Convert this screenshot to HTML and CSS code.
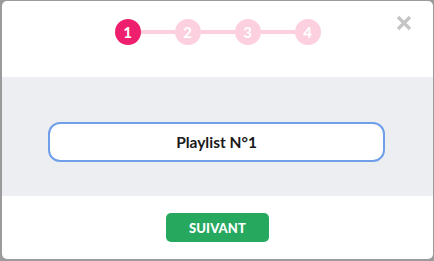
FILE: index.html
```html
<!DOCTYPE html>
<html>
<head>
<meta charset="utf-8">
<link rel="stylesheet" href="styles.css">
</head>
<body>
<div class="modal">
  <div class="head">
    <div class="steps">
      <span class="step active">1</span>
      <span class="bar"></span>
      <span class="step">2</span>
      <span class="bar"></span>
      <span class="step">3</span>
      <span class="bar"></span>
      <span class="step">4</span>
    </div>
    <button class="close" aria-label="Fermer">
      <svg width="16" height="16" viewBox="0 0 16 16"><path d="M2 2 L14 14 M14 2 L2 14" stroke="#c5c5c5" stroke-width="3.2" stroke-linecap="butt"/></svg>
    </button>
  </div>
  <div class="body">
    <div class="field">Playlist N°1</div>
  </div>
  <div class="foot">
    <button class="next">SUIVANT</button>
  </div>
</div>
</body>
</html>
```
FILE: styles.css
```css
html, body {
  margin: 0;
  padding: 0;
  background: #9b9b9b;
  width: 434px;
  height: 261px;
  overflow: hidden;
}
.modal {
  margin: 1px 1px 2px 2px;
  width: 431px;
  height: 258px;
  background: #fff;
  border-radius: 5px;
  overflow: hidden;
  display: flex;
  flex-direction: column;
  font-family: Lato, "Open Sans", sans-serif;
}
.head {
  position: relative;
  height: 76px;
  display: flex;
  justify-content: center;
  padding-top: 18px;
  box-sizing: border-box;
}
.steps {
  display: flex;
  align-items: center;
  height: 26px;
}
.step {
  width: 26px;
  height: 26px;
  border-radius: 50%;
  background: #fcd0df;
  color: #fff;
  font-weight: 700;
  font-size: 15px;
  display: flex;
  align-items: center;
  justify-content: center;
}
.step.active {
  background: #ee1f6c;
}
.bar {
  width: 34px;
  height: 4px;
  background: #fcd0df;
}
.close {
  position: absolute;
  right: 21px;
  top: 14px;
  border: 0;
  background: none;
  padding: 0;
  width: 16px;
  height: 16px;
}
.close svg { display: block; }
.body {
  height: 119px;
  background: #edeef2;
  padding-top: 45px;
  box-sizing: border-box;
  display: flex;
  justify-content: center;
}
.field {
  margin-left: -2px;
  width: 337px;
  height: 40px;
  box-sizing: border-box;
  border: 2.5px solid #6f9fe9;
  border-radius: 12px;
  background: #fff;
  display: flex;
  align-items: center;
  justify-content: center;
  font-size: 15.5px;
  font-weight: 700;
  color: #1a1a1a;
}
.foot {
  flex: 1;
  display: flex;
  justify-content: center;
  padding-top: 17px;
  box-sizing: border-box;
}
.next {
  width: 103px;
  height: 29px;
  border: 0;
  border-radius: 5px;
  background: #27a85f;
  color: #fff;
  font-family: Lato, "Open Sans", sans-serif;
  font-weight: 900;
  font-size: 13px;
  letter-spacing: 0.1px;
  padding: 0;
}
```
